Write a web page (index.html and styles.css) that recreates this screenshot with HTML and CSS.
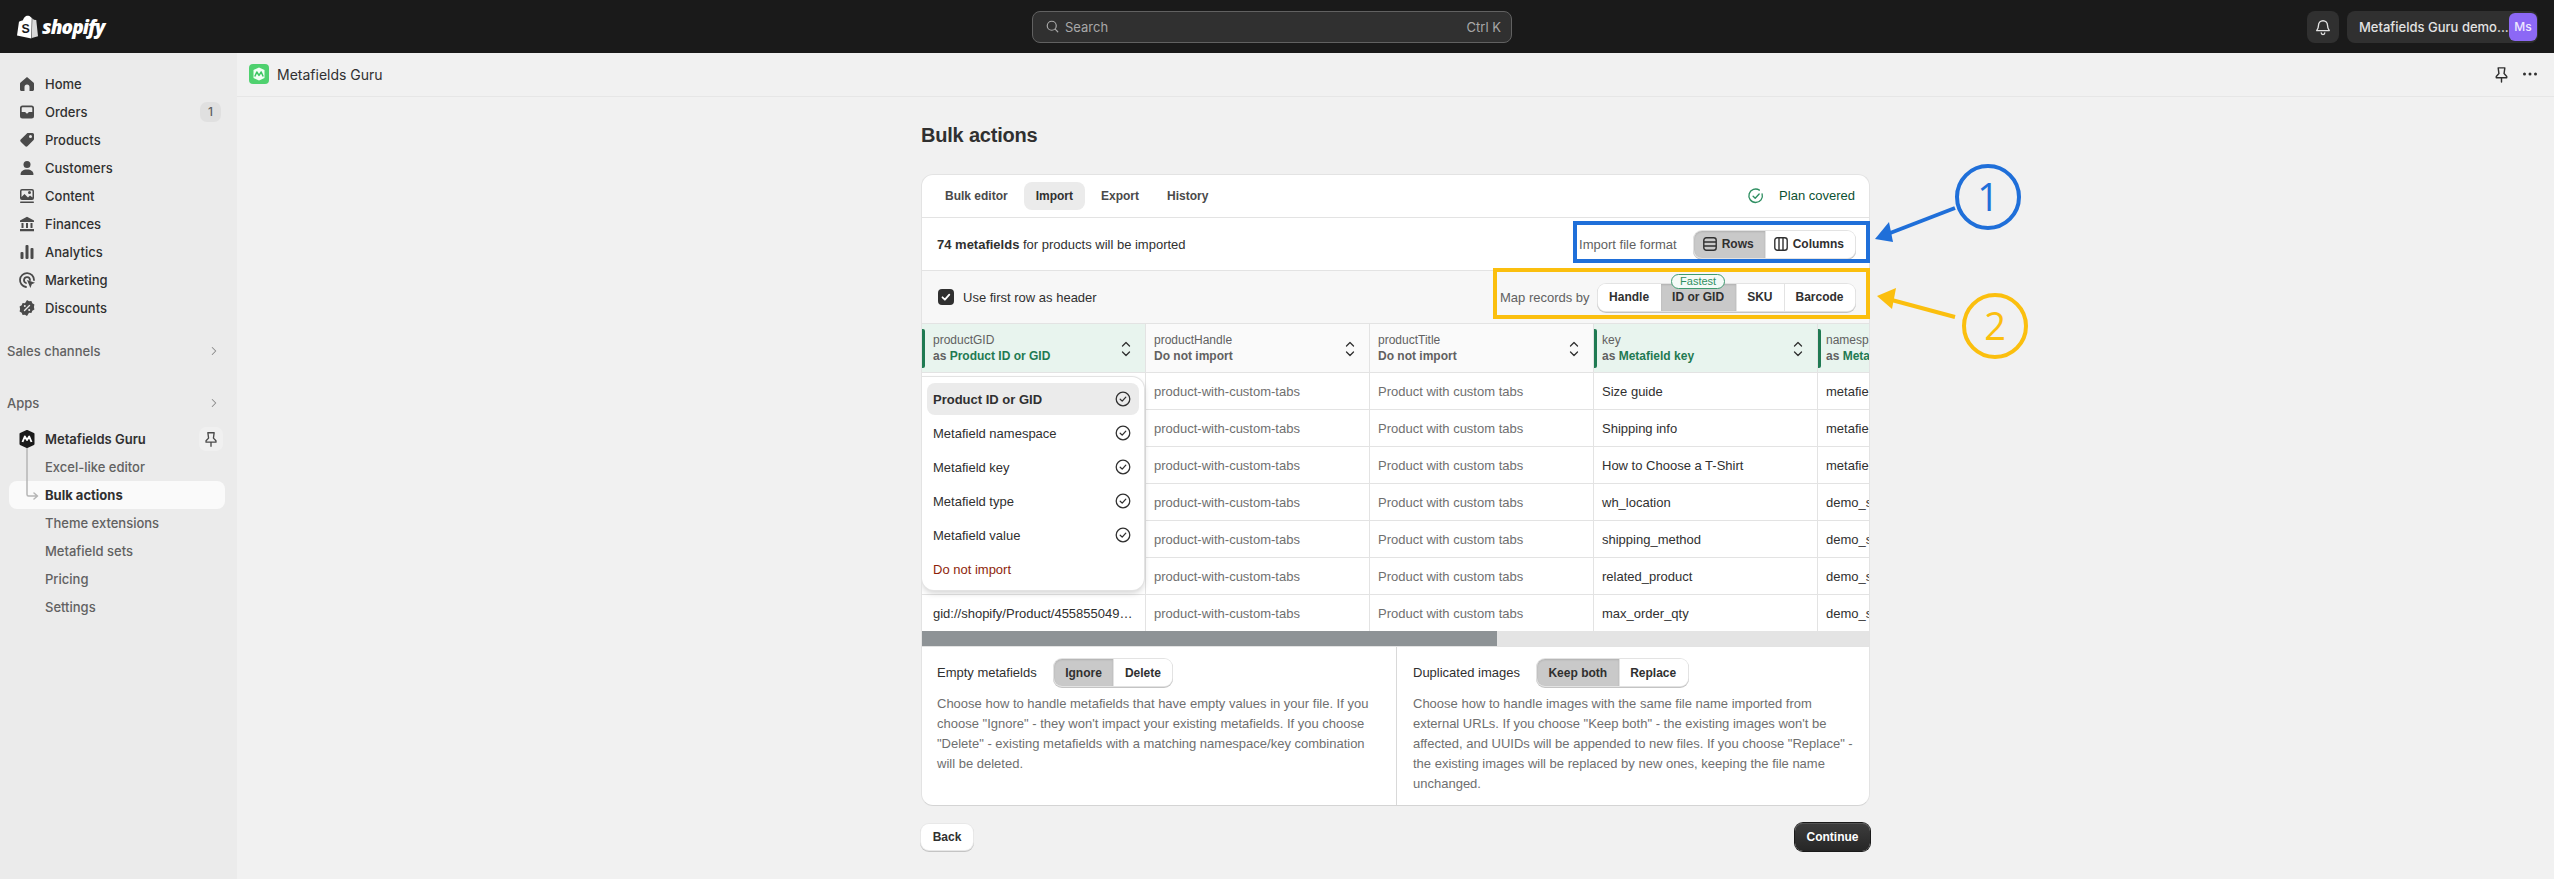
FILE: index.html
```html
<!DOCTYPE html>
<html lang="en">
<head>
    <meta charset="UTF-8">
    <title>Metafields Guru - Bulk actions</title>
    <link rel="stylesheet" href="styles.css">
</head>
<body>
    <svg class="icon-defs" aria-hidden="true">
        <symbol id="check-open" viewBox="0 0 20 20">
            <path d="M16.800 7.600A7.500 7.500 0 1 1 13.800 3.500" fill="none" stroke="currentColor" stroke-width="1.500" stroke-linecap="round"/>
            <path d="M6.800 10.200l2.300 2.300 4.400-4.800" fill="none" stroke="currentColor" stroke-width="1.500" stroke-linecap="round" stroke-linejoin="round"/>
        </symbol>
        <symbol id="check-circle" viewBox="0 0 20 20">
            <circle cx="10" cy="10" r="8.500" fill="none" stroke="currentColor" stroke-width="1.600"/>
            <path d="M6.500 10.300l2.500 2.400 4.500-5" fill="none" stroke="currentColor" stroke-width="1.600" stroke-linecap="round" stroke-linejoin="round"/>
        </symbol>
        <symbol id="selector" viewBox="0 0 12 20">
            <path d="M2.500 7 6 3.500 9.500 7M2.500 13 6 16.500 9.500 13" fill="none" stroke="currentColor" stroke-width="1.300" stroke-linecap="round" stroke-linejoin="round"/>
        </symbol>
        <symbol id="pin" viewBox="0 0 20 20">
            <path d="M6.500 3h7l-.8 6 2.800 3v1.500h-11V12l2.800-3zM10 13.500V18" fill="none" stroke="currentColor" stroke-width="1.500" stroke-linejoin="round" stroke-linecap="round"/>
        </symbol>
        <symbol id="chevron" viewBox="0 0 20 20">
            <path d="M7.500 5l5 5-5 5" fill="none" stroke="currentColor" stroke-width="1.500" stroke-linecap="round" stroke-linejoin="round"/>
        </symbol>
    </svg>

    <header class="topbar">
        <div class="brand">
            <svg class="brand-bag" viewBox="0 0 22 25">
                <path d="M15.500 3.200 14 1.800c-.8-1.100-2-1.500-3-1-.8-.3-1.500 0-2.200.6C7.500 2.500 6.600 4 6.200 5.500L3 6.500c-.8.300-.9.400-1 1.100L0 21.500 15 24.500z" fill="#fff"/>
                <path d="M16 3.300l1.700 1.700 2.200.2c.2 0 .3.200.3.300l1.800 16.800-6.500 1.700z" fill="#d9d9d9"/>
                <text x="4.800" y="18.500" class="brand-s">S</text>
            </svg>
            <span class="brand-name">shopify</span>
        </div>
        <div class="search">
            <svg class="search-icon" viewBox="0 0 20 20"><circle cx="9" cy="9" r="6" fill="none" stroke="currentColor" stroke-width="1.600"/><path d="M13.500 13.500 17 17" stroke="currentColor" stroke-width="1.600" stroke-linecap="round"/></svg>
            <span class="search-text">Search</span>
            <span class="search-keys">Ctrl K</span>
        </div>
        <div class="top-actions">
            <div class="bell">
                <svg viewBox="0 0 20 20"><path d="M10 3a5 5 0 0 0-5 5c0 3-.8 4.300-2 6h14c-1.200-1.700-2-3-2-6a5 5 0 0 0-5-5zM8 16.500a2 2 0 0 0 4 0" fill="none" stroke="#e3e3e3" stroke-width="1.500" stroke-linejoin="round" stroke-linecap="round"/></svg>
            </div>
            <div class="store">
                <span class="store-name">Metafields Guru demo...</span>
                <span class="avatar">Ms</span>
            </div>
        </div>
    </header>

    <div class="layout">
        <nav class="sidebar">
            <a class="nav-item">
                <svg class="nav-icon" viewBox="0 0 20 20"><path d="M10 3 3.600 8.400c-.4.300-.6.800-.6 1.300v5.800c0 .8.700 1.500 1.500 1.500h3v-4a2.500 2.500 0 0 1 5 0v4h3c.8 0 1.500-.7 1.500-1.500V9.700c0-.5-.2-1-.6-1.300z"/></svg>
                Home
            </a>
            <a class="nav-item">
                <svg class="nav-icon" viewBox="0 0 20 20"><path fill-rule="evenodd" d="M5.500 3.500h9A2.500 2.500 0 0 1 17 6v8a2.500 2.500 0 0 1-2.500 2.500h-9A2.500 2.500 0 0 1 3 14V6a2.500 2.500 0 0 1 2.500-2.500zM4.700 10h3.200c.4 0 .7.300.8.600a1.400 1.400 0 0 0 2.600 0c.1-.3.400-.6.800-.6h3.200V6c0-.4-.4-.8-.8-.8h-9c-.4 0-.8.400-.8.800z"/></svg>
                Orders
                <span class="nav-badge">1</span>
            </a>
            <a class="nav-item">
                <svg class="nav-icon" viewBox="0 0 20 20"><path fill-rule="evenodd" d="M11 3h4.500A1.500 1.500 0 0 1 17 4.500V9c0 .4-.2.800-.4 1.100l-6.200 6.200c-.6.600-1.500.600-2.100 0l-4.600-4.600c-.6-.6-.6-1.500 0-2.100l6.200-6.200c.3-.3.700-.4 1.100-.4zM13.500 8a1.500 1.500 0 1 0 0-3 1.500 1.500 0 0 0 0 3z"/></svg>
                Products
            </a>
            <a class="nav-item">
                <svg class="nav-icon" viewBox="0 0 20 20"><circle cx="10" cy="6.500" r="3.500"/><path d="M3.500 16.500c0-3 2.500-5 6.500-5s6.500 2 6.500 5c0 .3-.2.500-.5.500H4c-.3 0-.5-.2-.5-.5z"/></svg>
                Customers
            </a>
            <a class="nav-item">
                <svg class="nav-icon" viewBox="0 0 20 20"><path fill-rule="evenodd" d="M5 3h10a2 2 0 0 1 2 2v7a2 2 0 0 1-2 2H5a2 2 0 0 1-2-2V5a2 2 0 0 1 2-2zm0 1.500a.5.500 0 0 0-.5.500v6l3-3 3.500 3.500 2-2 2.500 2V5a.5.500 0 0 0-.5-.500zM12.500 8a1.500 1.500 0 1 0 0-3 1.500 1.500 0 0 0 0 3z"/><rect x="3" y="15.500" width="14" height="1.500" rx=".7"/></svg>
                Content
            </a>
            <a class="nav-item">
                <svg class="nav-icon" viewBox="0 0 20 20"><path d="M10 2.800 17 6.500V8H3V6.500zM4.500 9h2v5h-2zM9 9h2v5H9zM13.500 9h2v5h-2zM3 15h14v2.200H3z"/></svg>
                Finances
            </a>
            <a class="nav-item">
                <svg class="nav-icon" viewBox="0 0 20 20"><rect x="3.500" y="10" width="3" height="7" rx="1"/><rect x="8.500" y="3" width="3" height="14" rx="1"/><rect x="13.500" y="6" width="3" height="11" rx="1"/></svg>
                Analytics
            </a>
            <a class="nav-item">
                <svg class="nav-icon" viewBox="0 0 20 20"><path d="M9 17a7 7 0 1 1 8-7M9 13a3 3 0 1 1 4-3" fill="none" stroke="#4a4a4a" stroke-width="1.800" stroke-linecap="round"/><path d="M10 10l8 2.800-3.200 1.400L13.400 18z"/></svg>
                Marketing
            </a>
            <a class="nav-item">
                <svg class="nav-icon" viewBox="0 0 20 20"><path d="M10 2l2 1.300 2.400-.2.900 2.200 2.100 1.200-.5 2.500.5 2.500-2.100 1.200-.9 2.200-2.400-.2L10 18l-2-1.300-2.400.2-.9-2.200-2.100-1.200.5-2.500-.5-2.500 2.100-1.200.9-2.200 2.400.2z"/><path d="M7.500 12.500l5-5" stroke="#ebebeb" stroke-width="1.400" stroke-linecap="round"/><circle cx="7.800" cy="8" r="1" fill="#ebebeb"/><circle cx="12.200" cy="12" r="1" fill="#ebebeb"/></svg>
                Discounts
            </a>

            <div class="nav-section nav-section-sales">
                Sales channels
                <svg class="nav-chevron"><use href="#chevron"/></svg>
            </div>
            <div class="nav-section nav-section-apps">
                Apps
                <svg class="nav-chevron"><use href="#chevron"/></svg>
            </div>

            <div class="app-group">
                <svg class="tree-line" viewBox="0 0 14 52">
                    <path d="M1 0V46.500c0 1 .5 1.500 1.500 1.500H11M8 45l3.500 3L8 51" fill="none" stroke="#b5b5b5" stroke-width="1.500" stroke-linecap="round" stroke-linejoin="round"/>
                </svg>
                <a class="nav-item nav-app">
                    <svg class="nav-icon" viewBox="0 0 20 20"><path d="M10 2l6.500 3v10L10 18l-6.500-3V5z" fill="#1a1a1a" stroke="#1a1a1a" stroke-width="2" stroke-linejoin="round"/><path d="M5.500 13l2.300-5.500L10 11l2.200-3.500 2.300 5.500" fill="none" stroke="#fff" stroke-width="1.900" stroke-linejoin="round"/></svg>
                    Metafields Guru
                    <span class="pin-button"><svg><use href="#pin"/></svg></span>
                </a>
                <a class="nav-sub">Excel-like editor</a>
                <a class="nav-sub nav-sub-active">Bulk actions</a>
                <a class="nav-sub">Theme extensions</a>
                <a class="nav-sub">Metafield sets</a>
                <a class="nav-sub">Pricing</a>
                <a class="nav-sub">Settings</a>
            </div>
        </nav>

        <div class="content">
            <div class="app-bar">
                <svg class="app-logo" viewBox="0 0 20 20">
                    <rect width="20" height="20" rx="4" fill="#4fd16f"/>
                    <path d="M10 3.500l5.500 2.500v8L10 16.500 4.500 14V6z" fill="#f2fff5"/>
                    <path d="M5.800 12.500 7.800 8l2.200 3.400L12.200 8l2 4.500" fill="none" stroke="#3cc763" stroke-width="1.500" stroke-linejoin="round"/>
                </svg>
                <span class="app-name">Metafields Guru</span>
                <div class="app-bar-actions">
                    <svg class="app-pin"><use href="#pin"/></svg>
                    <svg class="app-dots" viewBox="0 0 16 4"><circle cx="2.500" cy="2" r="1.500"/><circle cx="8" cy="2" r="1.500"/><circle cx="13.500" cy="2" r="1.500"/></svg>
                </div>
            </div>

            <main class="page">
                <h1 class="page-title">Bulk actions</h1>

                <section class="card">
                    <div class="tabs">
                        <a class="tab">Bulk editor</a>
                        <a class="tab tab-active">Import</a>
                        <a class="tab">Export</a>
                        <a class="tab">History</a>
                        <span class="plan">
                            <svg class="plan-icon"><use href="#check-open"/></svg>
                            Plan covered
                        </span>
                    </div>

                    <div class="card-row">
                        <p class="summary"><b>74 metafields</b> for products will be imported</p>
                        <div class="row-control">
                            <span class="control-label">Import file format</span>
                            <div class="segmented">
                                <button class="seg seg-on seg-icon">
                                    <svg viewBox="0 0 14 14"><rect x=".8" y=".8" width="12.400" height="12.400" rx="2.500" fill="none" stroke="currentColor" stroke-width="1.400"/><path d="M1 5h12M1 9h12" stroke="currentColor" stroke-width="1.400"/></svg>
                                    Rows
                                </button>
                                <button class="seg seg-icon">
                                    <svg viewBox="0 0 14 14"><rect x=".8" y=".8" width="12.400" height="12.400" rx="2.500" fill="none" stroke="currentColor" stroke-width="1.400"/><path d="M5 1v12M9 1v12" stroke="currentColor" stroke-width="1.400"/></svg>
                                    Columns
                                </button>
                            </div>
                        </div>
                    </div>

                    <div class="card-row card-row-grey">
                        <label class="header-check">
                            <span class="checkbox">
                                <svg viewBox="0 0 16 16"><path d="M4.500 8.300l2.400 2.400 4.400-5" fill="none" stroke="#fff" stroke-width="1.800" stroke-linecap="round" stroke-linejoin="round"/></svg>
                            </span>
                            Use first row as header
                        </label>
                        <div class="row-control row-control-tight">
                            <span class="control-label">Map records by</span>
                            <div class="segmented">
                                <button class="seg">Handle</button>
                                <button class="seg seg-on seg-badged">ID or GID<span class="fastest">Fastest</span></button>
                                <button class="seg">SKU</button>
                                <button class="seg">Barcode</button>
                            </div>
                        </div>
                    </div>

                    <div class="table-wrap">
                        <table class="data">
                            <thead>
                                <tr>
                                    <th class="col-first mapped"><span class="col-name">productGID</span><span class="col-map">as <em>Product ID or GID</em></span><svg class="sort"><use href="#selector"/></svg></th>
                                    <th><span class="col-name">productHandle</span><span class="col-map">Do not import</span><svg class="sort"><use href="#selector"/></svg></th>
                                    <th><span class="col-name">productTitle</span><span class="col-map">Do not import</span><svg class="sort"><use href="#selector"/></svg></th>
                                    <th class="mapped"><span class="col-name">key</span><span class="col-map">as <em>Metafield key</em></span><svg class="sort"><use href="#selector"/></svg></th>
                                    <th class="mapped"><span class="col-name">namespace</span><span class="col-map">as <em>Metafield namespace</em></span></th>
                                </tr>
                            </thead>
                            <tbody>
                                <tr><td class="col-first"></td><td class="muted">product-with-custom-tabs</td><td class="muted">Product with custom tabs</td><td>Size guide</td><td>metafields</td></tr>
                                <tr><td class="col-first"></td><td class="muted">product-with-custom-tabs</td><td class="muted">Product with custom tabs</td><td>Shipping info</td><td>metafields</td></tr>
                                <tr><td class="col-first"></td><td class="muted">product-with-custom-tabs</td><td class="muted">Product with custom tabs</td><td>How to Choose a T-Shirt</td><td>metafields</td></tr>
                                <tr><td class="col-first"></td><td class="muted">product-with-custom-tabs</td><td class="muted">Product with custom tabs</td><td>wh_location</td><td>demo_store</td></tr>
                                <tr><td class="col-first"></td><td class="muted">product-with-custom-tabs</td><td class="muted">Product with custom tabs</td><td>shipping_method</td><td>demo_store</td></tr>
                                <tr><td class="col-first"></td><td class="muted">product-with-custom-tabs</td><td class="muted">Product with custom tabs</td><td>related_product</td><td>demo_store</td></tr>
                                <tr class="row-last"><td class="col-first">gid://shopify/Product/455855049…</td><td class="muted">product-with-custom-tabs</td><td class="muted">Product with custom tabs</td><td>max_order_qty</td><td>demo_store</td></tr>
                            </tbody>
                        </table>

                        <ul class="popover">
                            <li class="pop-item pop-item-on">Product ID or GID<svg><use href="#check-circle"/></svg></li>
                            <li class="pop-item">Metafield namespace<svg><use href="#check-circle"/></svg></li>
                            <li class="pop-item">Metafield key<svg><use href="#check-circle"/></svg></li>
                            <li class="pop-item">Metafield type<svg><use href="#check-circle"/></svg></li>
                            <li class="pop-item">Metafield value<svg><use href="#check-circle"/></svg></li>
                            <li class="pop-item pop-item-danger">Do not import</li>
                        </ul>
                    </div>

                    <div class="scrollbar"><div class="scrollbar-thumb"></div></div>

                    <div class="options">
                        <div class="option">
                            <div class="option-head">
                                <span>Empty metafields</span>
                                <div class="segmented">
                                    <button class="seg seg-on">Ignore</button>
                                    <button class="seg">Delete</button>
                                </div>
                            </div>
                            <p class="option-text">Choose how to handle metafields that have empty values in your file. If you choose "Ignore" - they won't impact your existing metafields. If you choose "Delete" - existing metafields with a matching namespace/key combination will be deleted.</p>
                        </div>
                        <div class="option">
                            <div class="option-head">
                                <span>Duplicated images</span>
                                <div class="segmented">
                                    <button class="seg seg-on">Keep both</button>
                                    <button class="seg">Replace</button>
                                </div>
                            </div>
                            <p class="option-text">Choose how to handle images with the same file name imported from external URLs. If you choose "Keep both" - the existing images won't be affected, and UUIDs will be appended to new files. If you choose "Replace" - the existing images will be replaced by new ones, keeping the file name unchanged.</p>
                        </div>
                    </div>
                </section>

                <div class="page-actions">
                    <button class="btn">Back</button>
                    <button class="btn btn-primary">Continue</button>
                </div>
            </main>
        </div>
    </div>

    <!-- callouts drawn on top of the screenshot -->
    <svg class="callouts" viewBox="0 0 2554 879">
        <rect x="1575" y="223" width="293" height="38" class="line-blue"/>
        <rect x="1495" y="270" width="373" height="47" class="line-yellow"/>
        <circle cx="1988" cy="197" r="31" class="line-blue"/>
        <circle cx="1995" cy="326" r="31" class="line-yellow"/>
        <path d="M1955 208 1885 235" class="line-blue"/>
        <path d="M1875 239 1889 222 1893 242z" class="fill-blue"/>
        <path d="M1955 317 1888 299" class="line-yellow"/>
        <path d="M1877 296 1896 288 1892 309z" class="fill-yellow"/>
        <text x="1988" y="211" class="callout-num fill-blue">1</text>
        <text x="1995" y="340" class="callout-num fill-yellow">2</text>
    </svg>
</body>
</html>
```

FILE: styles.css
```css
* {
    box-sizing: border-box;
}
html, body {
    margin: 0;
    height: 100%;
}
body {
    position: relative;
    display: flex;
    flex-direction: column;
    height: 879px;
    overflow: hidden;
    background: #f1f1f1;
    color: #303030;
    font-family: "Liberation Sans", Arial, sans-serif;
    font-size: 13px;
}
p, h1, ul {
    margin: 0;
    padding: 0;
}
button {
    font-family: inherit;
    border: none;
    cursor: pointer;
}
.icon-defs {
    display: none;
}

/* top bar */
.topbar {
    display: flex;
    align-items: center;
    flex: none;
    height: 53px;
    padding: 0 16px 0 17px;
    background: #1a1a1a;
    font-family: Inter, sans-serif;
}
.brand {
    display: flex;
    align-items: center;
    gap: 4px;
    width: 1015px;
}
.brand-bag {
    width: 21px;
    height: 24px;
}
.brand-s {
    font: bold 13px "Liberation Sans", sans-serif;
    fill: #1a1a1a;
}
.brand-name {
    color: #fff;
    font: italic 800 19px "Open Sans", sans-serif;
    letter-spacing: -.9px;
}
.search {
    display: flex;
    align-items: center;
    width: 480px;
    height: 32px;
    padding: 0 10px 0 12px;
    background: #303030;
    border: 1px solid #616161;
    border-radius: 8px;
    color: #a8a8a8;
}
.search-icon {
    width: 15px;
    height: 15px;
    margin-right: 5px;
}
.search-keys {
    margin-left: auto;
}
.top-actions {
    display: flex;
    gap: 8px;
    margin-left: auto;
}
.bell {
    display: flex;
    align-items: center;
    justify-content: center;
    width: 32px;
    height: 32px;
    background: #303030;
    border-radius: 8px;
}
.bell svg {
    width: 18px;
    height: 18px;
}
.store {
    display: flex;
    align-items: center;
    justify-content: space-between;
    width: 191px;
    height: 32px;
    padding: 0 1px 0 12px;
    background: #303030;
    border-radius: 8px;
    color: #e3e3e3;
    font-weight: 500;
}
.avatar {
    display: flex;
    align-items: center;
    justify-content: center;
    width: 28px;
    height: 28px;
    background: #8c68f5;
    border-radius: 6px;
    color: #efe9ff;
    font-size: 12px;
}

/* sidebar */
.layout {
    display: flex;
    flex: 1;
    min-height: 0;
}
.sidebar {
    flex: none;
    width: 237px;
    padding: 17px 12px 0 9px;
    background: #ebebeb;
    font-family: Inter, sans-serif;
}
.nav-item, .nav-sub {
    display: flex;
    align-items: center;
    height: 28px;
    color: #303030;
    font-weight: 550;
}
.nav-item {
    position: relative;
    padding-left: 8px;
}
.nav-icon {
    width: 20px;
    height: 20px;
    margin-right: 8px;
    fill: #4a4a4a;
}
.nav-badge {
    margin-left: auto;
    margin-right: 4px;
    width: 21px;
    height: 20px;
    line-height: 20px;
    background: #e0e0e0;
    border-radius: 7px;
    color: #616161;
    text-align: center;
    font-size: 12px;
}
.nav-section {
    display: flex;
    align-items: center;
    justify-content: space-between;
    height: 28px;
    margin-left: -2px;
    padding-right: 4px;
    color: #616161;
    font-weight: 550;
}
.nav-section-sales {
    margin-top: 15px;
}
.nav-section-apps {
    margin-top: 24px;
}
.nav-chevron {
    width: 14px;
    height: 14px;
    color: #8a8a8a;
}
.app-group {
    position: relative;
    margin-top: 8px;
}
.tree-line {
    position: absolute;
    left: 17px;
    top: 23px;
    z-index: 1;
    width: 14px;
    height: 52px;
}
.nav-app {
    font-weight: 600;
}
.pin-button {
    display: flex;
    align-items: center;
    justify-content: center;
    margin-left: auto;
    margin-right: 2px;
    width: 24px;
    height: 24px;
    background: #f0f0f0;
    border-radius: 7px;
}
.pin-button svg {
    width: 18px;
    height: 18px;
    color: #4a4a4a;
}
.nav-sub {
    padding-left: 36px;
    color: #616161;
    font-weight: 450;
    border-radius: 8px;
}
.nav-sub-active {
    background: #fafafa;
    color: #303030;
    font-weight: 650;
}

/* app bar */
.content {
    flex: 1;
    min-width: 0;
}
.app-bar {
    display: flex;
    align-items: center;
    height: 44px;
    padding: 0 16px 1px 12px;
    border-bottom: 1px solid #e6e6e6;
    font-family: Inter, sans-serif;
}
.app-logo {
    width: 20px;
    height: 20px;
    margin-right: 8px;
}
.app-name {
    font-size: 14px;
}
.app-bar-actions {
    display: flex;
    align-items: center;
    gap: 11px;
    margin-left: auto;
}
.app-pin {
    width: 19px;
    height: 19px;
    color: #303030;
}
.app-dots {
    width: 16px;
    height: 4px;
    fill: #303030;
}

/* page */
.page {
    width: 949px;
    margin: 0 auto;
    padding-top: 26px;
}
.page-title {
    margin-bottom: 27px;
    font-size: 20px;
    line-height: 24px;
    font-weight: 700;
    letter-spacing: -.2px;
}
.card {
    background: #fff;
    border: 1px solid #e3e3e3;
    border-bottom-color: #d4d4d4;
    border-radius: 12px;
    overflow: hidden;
}
.tabs {
    display: flex;
    align-items: center;
    gap: 4px;
    height: 43px;
    padding: 0 14px 1px 11px;
    border-bottom: 1px solid #e3e3e3;
}
.tab {
    height: 28px;
    line-height: 28px;
    padding: 0 12px;
    border-radius: 8px;
    color: #4a4a4a;
    font-size: 12px;
    font-weight: 700;
}
.tab-active {
    background: #ebebeb;
    color: #303030;
}
.plan {
    display: flex;
    align-items: center;
    gap: 14px;
    margin-left: auto;
    color: #0c5132;
}
.plan-icon {
    width: 18px;
    height: 18px;
    color: #2f8f62;
}
.card-row {
    display: flex;
    align-items: center;
    justify-content: space-between;
    height: 53px;
    padding: 0 14px 0 15px;
    border-bottom: 1px solid #e3e3e3;
}
.card-row-grey {
    background: #f7f7f7;
}
.row-control {
    display: flex;
    align-items: center;
    gap: 17px;
}
.row-control-tight {
    gap: 8px;
}
.control-label {
    color: #616161;
}
.header-check {
    display: flex;
    align-items: center;
    gap: 9px;
    padding-left: 1px;
}
.checkbox {
    width: 16px;
    height: 16px;
    background: #303030;
    border-radius: 4px;
}
.checkbox svg {
    display: block;
}

/* segmented buttons */
.segmented {
    display: flex;
    background: #fff;
    border-radius: 8px;
    box-shadow: 0 0 0 1px #e3e3e3, 0 1px 0 1px #c4c4c4;
}
.seg {
    position: relative;
    display: flex;
    align-items: center;
    height: 27px;
    padding: 0 11.5px;
    background: #fff;
    color: #303030;
    font-size: 12px;
    font-weight: 700;
    box-shadow: inset 1px 0 0 #e3e3e3;
}
.seg:first-child {
    box-shadow: none;
    border-radius: 8px 0 0 8px;
}
.seg:last-child {
    border-radius: 0 8px 8px 0;
}
.seg-on, .seg-on:first-child {
    background: #c9c9c9;
    box-shadow: inset 0 1px 2px rgba(0, 0, 0, .12);
}
.seg-icon {
    padding: 0 11px 0 9px;
    gap: 5px;
}
.seg-icon svg {
    width: 14px;
    height: 14px;
}
.fastest {
    position: absolute;
    top: -10px;
    left: 50%;
    transform: translateX(-50%);
    width: 54px;
    height: 15px;
    line-height: 13px;
    background: #f4faf7;
    border: 1px solid #3f9a70;
    border-radius: 8px;
    color: #2f8f62;
    font-size: 11px;
    font-weight: 400;
    text-align: center;
}

/* mapping table */
.table-wrap {
    position: relative;
    overflow: hidden;
}
.data {
    width: 1120px;
    table-layout: fixed;
    border-collapse: separate;
    border-spacing: 0;
}
.data th, .data td {
    width: 224px;
    padding: 0 8px;
    border-right: 1px solid #e3e3e3;
    border-bottom: 1px solid #e3e3e3;
    text-align: left;
    white-space: nowrap;
}
.data th {
    position: relative;
    height: 49px;
    background: #fafafa;
    font-size: 12px;
    font-weight: 400;
}
.data td {
    height: 37px;
}
.data .col-first {
    padding-left: 11px;
}
.data .row-last td {
    height: 36px;
    border-bottom: none;
}
.data .muted {
    color: #6f6f6f;
}
.data .mapped {
    background: #e8f4ee;
}
.mapped::before {
    content: "";
    position: absolute;
    left: 0;
    top: 5px;
    bottom: 4px;
    width: 3px;
    background: #1f7a52;
    border-radius: 0 2px 2px 0;
}
.col-name, .col-map {
    display: block;
    line-height: 16px;
}
.col-name {
    color: #616161;
}
.col-map {
    color: #616161;
    font-weight: 700;
}
.col-map em {
    color: #1f7a52;
    font-style: normal;
}
.sort {
    position: absolute;
    right: 13px;
    top: 15px;
    width: 12px;
    height: 20px;
    color: #303030;
}
.popover {
    position: absolute;
    left: 0;
    top: 53px;
    width: 222px;
    padding: 6px 5px 5px;
    background: #fff;
    border-radius: 0 12px 12px 12px;
    box-shadow: 0 0 0 1px #e3e3e3, 0 3px 6px rgba(0, 0, 0, .18);
    list-style: none;
}
.pop-item {
    display: flex;
    align-items: center;
    justify-content: space-between;
    height: 32px;
    margin-bottom: 2px;
    padding: 0 8px 0 6px;
    border-radius: 8px;
}
.pop-item svg {
    width: 16px;
    height: 16px;
}
.pop-item-on {
    background: #ebebeb;
    font-weight: 700;
}
.pop-item-danger {
    margin-bottom: 0;
    color: #8e1f0b;
}
.scrollbar {
    height: 15px;
    background: #e4e4e4;
}
.scrollbar-thumb {
    width: 575px;
    height: 100%;
    background: #8e9396;
}

/* options */
.options {
    display: flex;
    border-top: 1px solid #e3e3e3;
    height: 159px;
}
.option {
    flex: none;
    width: 474px;
    padding: 12px 14px 0 15px;
}
.option + .option {
    flex: 1;
    padding-left: 16px;
    border-left: 1px solid #d9d9d9;
}
.option-head {
    display: flex;
    align-items: center;
    gap: 17px;
    margin-bottom: 8px;
}
.option-text {
    color: #6f6f6f;
    line-height: 20px;
}

/* footer buttons */
.page-actions {
    display: flex;
    align-items: center;
    justify-content: space-between;
    margin-top: 17px;
}
.btn {
    height: 26px;
    width: 52px;
    background: #fff;
    border-radius: 8px;
    color: #303030;
    font-size: 12px;
    font-weight: 700;
    box-shadow: 0 0 0 1px #e8e8e8, 0 1px 0 1px #c4c4c4;
}
.btn-primary {
    width: 75px;
    height: 28px;
    background: linear-gradient(#3d3d3d, #262626);
    color: #fff;
    box-shadow: inset 0 1px 0 #555, 0 0 0 1px #1a1a1a;
}

/* callouts */
.callouts {
    position: absolute;
    left: 0;
    top: 0;
    width: 2554px;
    height: 879px;
    pointer-events: none;
}
.line-blue, .line-yellow {
    fill: none;
    stroke-width: 4;
}
.line-blue {
    stroke: #1f6fd9;
}
.line-yellow {
    stroke: #fbbf0e;
}
.fill-blue {
    fill: #1f6fd9;
}
.fill-yellow {
    fill: #fbbf0e;
}
.callout-num {
    font-family: "Open Sans", sans-serif;
    font-size: 38px;
    text-anchor: middle;
}
```
